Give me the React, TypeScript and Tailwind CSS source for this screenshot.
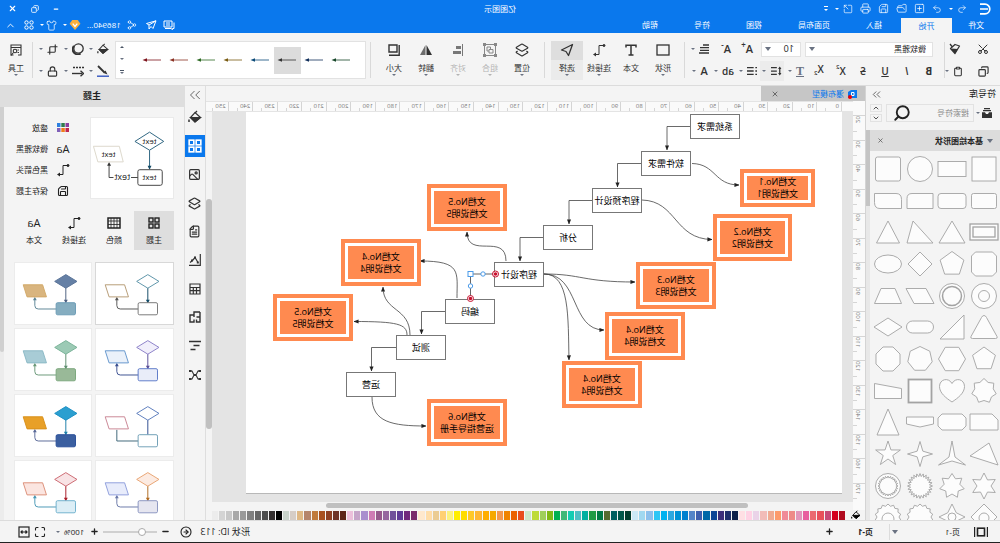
import type { ReactNode } from "react";
import {
  ChevronDown,
  ChevronUp,
  ChevronsRight,
  CircleArrowRight,
  Clipboard,
  Copy,
  Crop,
  FileText,
  FolderOpen,
  Image,
  Layers2,
  Lock,
  Maximize,
  Minus,
  Plus,
  Printer,
  Redo2,
  Save,
  Scissors,
  Search,
  Share2,
  Shirt,
  SquareArrowOutUpRight,
  SquarePlus,
  Undo2,
  X,
} from "lucide-react";

/* ---------- small shared pieces ---------- */

function Caret({ className = "h-0.5 w-1 text-gray-500" }: { className?: string }) {
  return (
    <svg viewBox="0 0 4 2" preserveAspectRatio="none" className={`shrink-0 ${className}`}>
      <path d="M0 0h4L2 2z" fill="currentColor" />
    </svg>
  );
}

interface ToolProps {
  label: string;
  children: ReactNode;
  caret?: boolean;
  muted?: boolean;
  className?: string;
}

function Tool({ label, children, caret, muted, className = "" }: ToolProps) {
  return (
    <button
      type="button"
      aria-label={label}
      className={`flex h-5 items-center gap-1 ${muted ? "text-gray-400" : "text-[#333]"} ${className}`}
    >
      {children}
      {caret && <Caret />}
    </button>
  );
}

interface BigToolProps {
  label: string;
  children: ReactNode;
  caret?: boolean;
  disabled?: boolean;
  active?: boolean;
}

function BigTool({ label, children, caret, disabled, active }: BigToolProps) {
  return (
    <button
      type="button"
      disabled={disabled}
      className={`flex h-[39px] w-8 flex-col items-center text-[8px] leading-3 ${
        disabled ? "text-[#b4b4b4]" : "text-[#333]"
      } ${active ? "bg-[#ebebeb]" : ""}`}
    >
      <span className={`flex h-[19px] w-full items-center justify-center ${active ? "bg-[#dedede]" : ""}`}>
        {children}
      </span>
      <span className="mt-0.5 whitespace-nowrap">{label}</span>
      {caret && <Caret className={disabled ? "h-0.5 w-1 text-[#b4b4b4]" : "h-0.5 w-1 text-gray-500"} />}
    </button>
  );
}

function Divider() {
  return <div className="h-9 w-px shrink-0 bg-[#d9d9d9]" />;
}

function ConnectorIcon({ className = "size-3.5" }: { className?: string }) {
  return (
    <svg viewBox="0 0 14 14" className={className} fill="none" stroke="currentColor">
      <path d="M2 2.5h5v9h4" />
      <circle cx="2" cy="2.5" r="1" fill="currentColor" />
      <path d="M10 9.5l3 2-3 2z" fill="currentColor" stroke="none" />
    </svg>
  );
}

function GridIcon({ className = "size-3" }: { className?: string }) {
  return (
    <svg viewBox="0 0 12 12" className={className} fill="none" stroke="currentColor" strokeWidth="1.4">
      <rect x="1" y="1" width="4" height="4" />
      <rect x="7" y="1" width="4" height="4" />
      <rect x="1" y="7" width="4" height="4" />
      <rect x="7" y="7" width="4" height="4" />
    </svg>
  );
}

function BucketIcon({ className = "size-3.5" }: { className?: string }) {
  return (
    <svg viewBox="0 0 14 14" className={className} fill="none" stroke="currentColor" strokeWidth="1.2">
      <path d="M5 1l2 2" />
      <path d="M1.5 7.5L7 2.5l4.5 5L7 12z" />
      <path d="M1.5 7.5h10L7 12z" fill="currentColor" />
      <path d="M13 9.5V12" strokeWidth="1.5" />
    </svg>
  );
}

/* ---------- title bar ---------- */

const tabs = ["插入", "页面布局", "视图", "符号", "帮助"];

function TitleBar() {
  return (
    <header className="shrink-0 bg-[#0a78ed] text-white">
      <div className="grid h-[17px] grid-cols-3 items-center">
        <div className="flex items-center gap-[7px] pl-2">
          <svg viewBox="0 0 14 12" className="h-3 w-3.5" fill="none" stroke="currentColor" strokeWidth="1.7">
            <path d="M12 1.2H7a4.8 4.8 0 0 0 0 9.6h5M4 6h8" />
          </svg>
          <button type="button" aria-label="撤销" className="ml-1 flex items-center gap-1">
            <Undo2 size={10} strokeWidth={1.6} />
            <Caret className="h-0.5 w-1 text-white" />
          </button>
          <button type="button" aria-label="重做"><Redo2 size={10} strokeWidth={1.6} /></button>
          <button type="button" aria-label="新建"><SquarePlus size={11} strokeWidth={1.6} /></button>
          <button type="button" aria-label="打开"><FolderOpen size={11} strokeWidth={1.6} /></button>
          <button type="button" aria-label="保存"><Save size={11} strokeWidth={1.6} /></button>
          <button type="button" aria-label="打印"><Printer size={11} strokeWidth={1.6} /></button>
          <button type="button" aria-label="导出" className="flex items-center gap-1">
            <SquareArrowOutUpRight size={10} strokeWidth={1.6} />
            <Caret className="h-0.5 w-1 text-white" />
          </button>
          <button type="button" aria-label="更多" className="flex flex-col items-center gap-0.5">
            <span className="h-px w-1 bg-white" />
            <Caret className="h-0.5 w-1 text-white" />
          </button>
        </div>
        <h1 className="text-center text-[8px] leading-4">亿图图示</h1>
        <div className="flex items-center justify-end gap-3.5 pr-2">
          <button type="button" aria-label="最小化"><Minus size={6} strokeWidth={5} /></button>
          <button type="button" aria-label="还原"><Copy size={8} strokeWidth={2.5} /></button>
          <button type="button" aria-label="关闭"><X size={9} strokeWidth={3} /></button>
        </div>
      </div>
      <div className="flex h-4 items-center text-[8px] leading-4">
        <button type="button" className="w-12">文件</button>
        <button type="button" className="h-[15px] w-[51px] self-end bg-[#f4f4f4] text-[#0a78ed]">开始</button>
        <nav className="flex items-center gap-9 pl-[19px]">
          {tabs.map((tab) => (
            <button key={tab} type="button">{tab}</button>
          ))}
        </nav>
        <div className="ml-auto flex items-center gap-1.5 pr-[5px]">
          <svg viewBox="0 0 12 10" className="h-2.5 w-3" fill="none" stroke="currentColor">
            <path d="M1 2.5v6h1.5v1.2L4 8.5h6M3 1h8v6H3zM5 3h4M5 5h4" />
          </svg>
          <svg viewBox="0 0 12 10" className="h-2.5 w-3" fill="none" stroke="currentColor">
            <path d="M1 .8l9.500 2.700L8 5v4L6 6.500 4 8.500zM8 5L1 .8" />
          </svg>
          <Share2 size={10} strokeWidth={1.8} className="ml-0.5" />
          <span>186940...</span>
          <svg viewBox="0 0 12 11" className="h-2.5 w-3">
            <path d="M3 0h6l3 4-6 7-6-7z" fill="#f9b03c" />
            <path d="M3.5 4L6 7l2.5-3" fill="none" stroke="#fff" strokeWidth="1.5" />
          </svg>
          <Caret className="-ml-1 h-0.5 w-1 text-white" />
          <Shirt size={11} strokeWidth={1.6} />
          <Caret className="-ml-1 h-0.5 w-1 text-white" />
          <svg viewBox="0 0 10 10" className="size-2.5" fill="none" stroke="currentColor">
            <circle cx="2.5" cy="2.5" r="1.7" />
            <circle cx="7.5" cy="2.5" r="1.7" />
            <circle cx="2.5" cy="7.5" r="1.7" />
            <circle cx="7.5" cy="7.5" r="1.7" />
          </svg>
          <ChevronUp size={11} className="ml-0.5" />
        </div>
      </div>
    </header>
  );
}

/* ---------- ribbon ---------- */

const lineStyles = ["#17472a", "#12305c", "#333333", "#0b4a78", "#7a5c12", "#2f6b25", "#8b3325", "#7d141d"];

function Ribbon() {
  return (
    <div className="flex h-[53px] shrink-0 items-center border-b border-[#dcdcdc] bg-[#f4f4f4] pt-0.5">
      <div className="grid w-[55px] grid-cols-2 gap-y-0.5 pl-[11px]">
        <Tool label="剪切"><Scissors size={12} className="-rotate-90" /></Tool>
        <Tool label="格式刷" className="pl-1.5">
          <svg viewBox="0 0 12 12" className="size-3" fill="none" stroke="currentColor" strokeWidth="1.3">
            <path d="M11 1L9 3.500M1.500 3L6 1.500 10.500 5.500 6 10.500z" strokeLinejoin="round" />
            <path d="M3 6l7-.5-4 5z" fill="currentColor" stroke="none" />
          </svg>
        </Tool>
        <Tool label="复制"><Copy size={11} strokeWidth={2.5} /></Tool>
        <Tool label="粘贴" caret className="pl-1"><Clipboard size={11} strokeWidth={2.5} /></Tool>
      </div>
      <Divider />

      <div className="flex w-[259px] flex-col gap-0.5 pl-1">
        <div className="flex h-5 items-center pl-[7px]">
          <div className="relative flex items-center">
            <select
              aria-label="字体"
              className="h-[15px] w-32 appearance-none border border-[#e2e2e2] bg-white pl-1.5 text-[8px] leading-3 text-[#222]"
            >
              <option>微软雅黑</option>
            </select>
            <Caret className="pointer-events-none absolute right-1 h-1 w-1.5 text-gray-500" />
          </div>
          <div className="relative ml-1 flex items-center">
            <select
              aria-label="字号"
              className="h-[15px] w-10 appearance-none border border-[#e2e2e2] bg-white pl-1.5 text-[9px] leading-3 text-[#222]"
            >
              <option>10</option>
            </select>
            <Caret className="pointer-events-none absolute right-1 h-1 w-1.5 text-gray-500" />
          </div>
          <Tool label="增大字号" className="ml-2 w-[22px]">
            <span className="flex text-[11px] leading-4 font-semibold">A<span className="-mt-1 text-[8px]">+</span></span>
          </Tool>
          <Tool label="减小字号" className="w-[22px]">
            <span className="flex text-[11px] leading-4 font-semibold">A<span className="-mt-1 text-[8px]">-</span></span>
          </Tool>
          <Tool label="对齐方式" caret>
            <svg viewBox="0 0 10 10" className="size-2.5" stroke="currentColor" strokeWidth="1.3">
              <path d="M0 1h6M0 3.700h9M0 6.400h9M0 9h10" />
            </svg>
          </Tool>
        </div>
        <div className="flex h-5 items-center text-[10px] leading-4 font-semibold">
          <Tool label="加粗" className="w-[22px] justify-center"><span className="font-bold">B</span></Tool>
          <Tool label="斜体" className="w-[22px] justify-center"><span className="italic">I</span></Tool>
          <Tool label="下划线" className="w-[22px] justify-center"><span className="underline">U</span></Tool>
          <Tool label="删除线" className="w-[22px] justify-center"><span className="line-through">S</span></Tool>
          <Tool label="上标" className="w-[22px] justify-center">
            <span className="flex">X<span className="-mt-1 text-[6px]">2</span></span>
          </Tool>
          <Tool label="下标" className="w-[22px] justify-center">
            <span className="flex">X<span className="mt-1 text-[6px]">2</span></span>
          </Tool>
          <Tool label="清除格式" muted caret className="w-6 justify-center">
            <span className="font-['Liberation_Serif'] text-[12px] text-gray-500 underline">T</span>
          </Tool>
          <Tool label="行距" caret className="w-6 justify-center bg-[#ececec]">
            <svg viewBox="0 0 14 12" className="h-2.5 w-3" fill="none" stroke="currentColor" strokeWidth="1.5">
              <path d="M2.5 2v8M6 2h7M6 6h7M6 10h7" />
              <path d="M.5 3.5l2-3 2 3zM.5 8.5l2 3 2-3z" fill="currentColor" stroke="none" />
            </svg>
          </Tool>
          <Tool label="项目符号" caret className="w-6 justify-center">
            <svg viewBox="0 0 12 12" className="size-2.5" stroke="currentColor" strokeWidth="1.6">
              <path d="M0 2h2M4 2h8M0 6h2M4 6h8M0 10h2M4 10h8" />
            </svg>
          </Tool>
          <Tool label="文字间距" caret className="w-6 justify-center">ab</Tool>
          <Tool label="字体颜色" caret className="w-6 justify-center text-[11px]">A</Tool>
        </div>
      </div>
      <Divider />

      <div className="flex w-[139px] pl-[5px]">
        <BigTool label="形状" caret>
          <svg viewBox="0 0 14 12" className="h-3 w-3.5" fill="none" stroke="currentColor" strokeWidth="1.3">
            <rect x="1" y="1" width="12" height="10" />
          </svg>
        </BigTool>
        <BigTool label="文本">
          <svg viewBox="0 0 12 12" className="size-3" fill="none" stroke="currentColor" strokeWidth="1.5">
            <path d="M1 3.5V1.2h10v2.3M6 1v10M3.5 11h5" />
          </svg>
        </BigTool>
        <BigTool label="连接线" caret>
          <ConnectorIcon />
        </BigTool>
        <BigTool label="选择" caret active>
          <svg viewBox="0 0 14 14" className="size-3.5" fill="none" stroke="currentColor" strokeWidth="1.3">
            <path d="M1.500 1.500L12.500 7 8 8.500 5.500 12.500z" strokeLinejoin="round" />
          </svg>
        </BigTool>
      </div>
      <Divider />

      <div className="flex w-[173px] pl-1.5">
        <BigTool label="位置" caret>
          <Layers2 size={14} />
        </BigTool>
        <BigTool label="组合" caret disabled>
          <svg viewBox="0 0 14 14" className="size-3.5 text-[#888]" fill="none" stroke="currentColor">
            <path d="M1.5 1.5h11v11h-11z" />
            <path d="M4 6.5h4V10H4zM6.5 6.500V4H10v4H8" />
            <path d="M0 0h3v3H0zM11 0h3v3h-3zM0 11h3v3H0zM11 11h3v3h-3z" fill="currentColor" stroke="none" />
          </svg>
        </BigTool>
        <BigTool label="对齐" caret disabled>
          <svg viewBox="0 0 10 12" className="h-3 w-2.5 text-[#777]" fill="currentColor">
            <path d="M0 0h1v12H0zM2 2h5v3H2zM2 7h8v3H2z" />
          </svg>
        </BigTool>
        <BigTool label="翻转" caret>
          <svg viewBox="0 0 12 12" className="size-3" fill="currentColor">
            <path d="M5.5 1v10H0z" />
            <path d="M6.5 1v10H12z" opacity="0.7" />
          </svg>
        </BigTool>
        <BigTool label="大小" caret>
          <svg viewBox="0 0 12 12" className="size-3" fill="none" stroke="currentColor" strokeWidth="1.4">
            <path d="M3 1h8v7H3zM.8 1v10.200H11" />
          </svg>
        </BigTool>
      </div>
      <Divider />

      <div className="ml-1 flex h-[38px] min-w-0 flex-1 items-center border border-[#e2e2e2] bg-white pl-2.5">
        <div className="flex flex-1 justify-between overflow-hidden">
          {lineStyles.map((color, i) => (
            <button
              key={color}
              type="button"
              aria-label={`线条样式 ${i + 1}`}
              className={`flex h-[27px] w-[27px] items-center justify-center ${i === 2 ? "bg-[#dcdcdc]" : ""}`}
            >
              <svg viewBox="0 0 20 6" className="h-1.5 w-5" style={{ color }}>
                <path d="M1 3h15" stroke="currentColor" strokeWidth="0.8" />
                <path d="M15 1.3L19.5 3 15 4.7z" fill="currentColor" />
              </svg>
            </button>
          ))}
        </div>
        <div className="ml-2.5 flex w-3 flex-col items-center gap-2.5">
          <Caret className="h-0.5 w-1 rotate-180 text-gray-600" />
          <Caret />
          <span className="flex flex-col items-center gap-px">
            <span className="h-px w-1 bg-gray-600" />
            <Caret />
          </span>
        </div>
      </div>

      <div className="grid w-[82px] grid-cols-3 gap-y-0.5 pl-1.5">
        <Tool label="填充" caret><BucketIcon className="size-3" /></Tool>
        <Tool label="阴影" caret>
          <svg viewBox="0 0 12 12" className="size-3" fill="none" stroke="currentColor" strokeWidth="1.3">
            <circle cx="5.5" cy="5.5" r="4.7" />
            <path d="M10 3a5 5 0 0 1-6.500 7.500" strokeWidth="2" />
          </svg>
        </Tool>
        <Tool label="裁剪" caret><Crop size={11} strokeWidth={2.5} /></Tool>
        <Tool label="线条颜色" caret>
          <svg viewBox="0 0 12 12" className="size-3" fill="none" stroke="currentColor">
            <path d="M11 1L4.500 7.500" strokeWidth="1.8" />
            <path d="M3.500 5.500L1.500 9.500 5.500 8z" fill="currentColor" stroke="none" />
            <path d="M0 11.200h12" stroke="#3355c0" strokeWidth="1.4" />
          </svg>
        </Tool>
        <Tool label="线型" caret>
          <svg viewBox="0 0 12 12" className="size-3" fill="none" stroke="currentColor" strokeWidth="1.4">
            <path d="M0 2.5h12" strokeDasharray="2 1" />
            <path d="M12 8.5H2" />
            <path d="M3.5 5.8l-3 2.700 3 2.700" />
          </svg>
        </Tool>
        <Tool label="锁定" caret><Lock size={11} strokeWidth={2.5} /></Tool>
      </div>
      <Divider />
      <BigTool label="工具" caret>
        <svg viewBox="0 0 12 12" className="size-3" fill="none" stroke="currentColor" strokeWidth="1.1">
          <path d="M4 11H1V1h10v10H8.500M1 3.500h10" />
          <circle cx="7" cy="7" r="1.800" />
          <path d="M8.500 8.500L11 11.500M3 6h1.500M3 8.500h1.500" />
        </svg>
      </BigTool>
    </div>
  );
}

/* ---------- symbol library ---------- */

function radial(n: number, outer: number, inner = outer, turn = 0) {
  const steps = inner === outer ? n : n * 2;
  return Array.from({ length: steps }, (_, i) => {
    const r = inner !== outer && i % 2 ? inner : outer;
    const a = (i * 2 * Math.PI) / steps - Math.PI / 2 + turn;
    return `${(r * Math.cos(a)).toFixed(2)},${(r * Math.sin(a)).toFixed(2)}`;
  }).join(" ");
}

const symbols: ReactNode[] = [
  <rect x="-12" y="-12" width="24" height="24" />,
  <rect x="-14" y="-7.5" width="28" height="15" />,
  <circle r="12.5" />,
  <rect x="-12.5" y="-12" width="25" height="24" rx="2" />,

  <rect x="-12.5" y="-7.5" width="25" height="15" rx="2" />,
  <rect x="-14" y="-7.5" width="28" height="15" rx="3" />,
  <path d="M-13 -7.5H8q5 0 5 5V7.5H-13z" />,
  <path d="M-13.5 -7.5H8q5.500 0 5.500 6V7.500H-8q-5.500 0-5.500-6z" transform="scale(1 -1) rotate(180)" />,

  <g strokeWidth="1.3"><rect x="-14" y="-8" width="28" height="16" /><rect x="-11" y="-5" width="22" height="10" /></g>,
  <path d="M0 -11L13 11H-13z" />,
  <path d="M7 -11L13 11H-13z" />,
  <path d="M0 -11L11.5 11H-11.5z" />,

  <path d="M-8.5 -12h17l4 4V8l-4 4h-17l-4-4V-8z" />,
  <polygon points={radial(5, 12.5)} />,
  <path d="M0 -12L12 0 0 12-12 0z" />,
  <ellipse rx="13.5" ry="9" />,

  <g><circle r="12.5" /><circle r="5.5" /></g>,
  <g><circle r="12.5" /><circle r="9.5" strokeWidth="1.5" /></g>,
  <path d="M-6 -7.5H14L6 7.5H-14z" />,
  <path d="M-7 -7.5H7L13.5 7.5H-13.5z" />,

  <path d="M0 -11.5q1.500 0 2.500 2L13 9.500q1 2-1.500 2h-23q-2.500 0-1.500-2L-2.500 -9.500q1-2 2.500-2z" />,
  <path d="M-12 -12V12H12z" />,
  <rect x="-13.5" y="-6" width="27" height="12" rx="6" />,
  <path d="M0 -9L14 0 0 9-14 0z" />,

  <polygon points={radial(5, 12)} strokeLinejoin="round" />,
  <polygon points={radial(6, 13.5, 13.5, Math.PI / 6)} />,
  <polygon points={radial(7, 12.5)} />,
  <polygon points={radial(8, 13, 13, Math.PI / 8)} />,

  <polygon points={radial(7, 12.5, 9.5)} strokeLinejoin="round" />,
  <path d="M0 11C-6 7-12.5 2-12.5 -4.5C-12.5 -12-3.5 -14 0 -7.5C3.5 -14 12.5 -12 12.5 -4.5C12.5 2 6 7 0 11z" />,
  <rect x="-11.5" y="-11.5" width="23" height="23" strokeWidth="1.8" />,
  <path d="M13.5 -7.5V7.5H-13.5V-2.500z" />,

  <path d="M-8 -8H14V8H-14V-2z" />,
  <path d="M-10 -8h20l4 4V4l-4 4h-20l-4-4v-8z" />,
  <path d="M-13.5 -5h27V2L0 5-13.5 2z" />,
  <path d="M0 -13L11 13H-11z" />,

  <path d="M-5 -11L14 2-14 11z" />,
  <path d="M0 -13L3 3 13.5 11 0 7-13.5 11-3 3z" />,
  <polygon points={radial(4, 12.5, 4)} />,
  <polygon points={radial(5, 13, 5)} />,

  <polygon points={radial(6, 13, 7)} />,
  <polygon points={radial(7, 12.5, 8)} />,
  <polygon points={radial(24, 12.5, 9.5)} />,
  <g><circle r="12.5" /><polygon points={radial(24, 10, 8)} /></g>,

  <g><path d="M0 -13L13 0 0 13-13 0z" /><circle cy="1" r="5" /></g>,
  <g><polygon points={radial(4, 13, 6)} /><circle r="4" /></g>,
  <polygon points={radial(14, 13, 11)} />,
  <g><polygon points={radial(14, 13, 11)} /><circle cy="2" r="6" /></g>,
];

function SymbolPanel() {
  return (
    <aside className="flex w-[135px] shrink-0 flex-col border-r border-[#d4d4d4] bg-[#f4f4f4]">
      <div className="flex h-4 items-center justify-between px-1">
        <h2 className="text-[9px] leading-4 text-[#222]">符号库</h2>
        <button type="button" aria-label="折叠" className="text-[#555]"><ChevronsRight size={13} strokeWidth={1.6} /></button>
      </div>
      <div className="mt-0.5 flex items-center pr-1 pl-2">
        <button type="button" aria-label="打开符号库" className="flex items-center gap-0.5">
          <svg viewBox="0 0 10 10" className="size-2.5" fill="#333">
            <path d="M2 0h6v1.2H2zM1 2h8v1.3H1zM0 4.3h3L4 6h2l1-1.700h3V10H0z" />
          </svg>
          <Caret />
        </button>
        <label className="ml-0.5 flex h-[18px] flex-1 items-center border border-[#e2e2e2] pl-1">
          <input
            type="text"
            aria-label="搜索符号"
            placeholder="搜索符号"
            className="w-0 flex-1 bg-transparent text-[8px] leading-4 outline-none placeholder:text-[#8a8a8a]"
          />
          <Search size={18} strokeWidth={2.5} className="mr-1.5 text-[#222]" />
        </label>
        <div className="ml-1 flex flex-col gap-0.5">
          <button type="button" aria-label="上一个" className="flex h-2 w-3 items-center justify-center border border-[#e2e2e2]">
            <ChevronUp size={8} />
          </button>
          <button type="button" aria-label="下一个" className="flex h-2 w-3 items-center justify-center border border-[#e2e2e2]">
            <ChevronDown size={8} />
          </button>
        </div>
      </div>
      <div className="mt-2 flex min-h-0 flex-1">
        <div className="min-w-0 flex-1 overflow-hidden">
          <div className="flex h-[21px] items-center bg-[#dcdcdc] px-[7px]">
            <Caret className="h-1 w-1.5 text-gray-500" />
            <h3 className="ml-1 flex-1 text-[8px] leading-4 font-bold text-[#222]">基本绘图形状</h3>
            <button type="button" aria-label="关闭分组" className="text-[#555]"><X size={7} strokeWidth={2.5} /></button>
          </div>
          <div className="mt-0.5 grid h-[380px] w-32 grid-cols-4 grid-rows-12">
            {symbols.map((shape, i) => (
              <button key={i} type="button" aria-label={`符号 ${i + 1}`} className="flex items-center justify-center">
                <svg viewBox="-16 -16 32 32" className="size-8" fill="#fcfcfc" stroke="#a3a3a3" strokeWidth="0.9">
                  {shape}
                </svg>
              </button>
            ))}
          </div>
        </div>
        <div className="w-1 bg-[#e8e8e8]">
          <div className="h-[76px] bg-[#c4c4c4]" />
        </div>
      </div>
    </aside>
  );
}

/* ---------- canvas ---------- */

const steps = [
  { text: "系统需求", x: 102, y: 2 },
  { text: "软件需求", x: 151, y: 39 },
  { text: "程序预设计", x: 200, y: 76 },
  { text: "分析", x: 249, y: 113 },
  { text: "程序设计", x: 298, y: 150 },
  { text: "编码", x: 347, y: 187 },
  { text: "测试", x: 396, y: 223 },
  { text: "运营", x: 446, y: 260 },
];

const notes = [
  { title: "文档No.1", text: "文档说明1", x: 27, y: 57, w: 75, h: 38 },
  { title: "文档No.2", text: "文档说明2", x: 50, y: 102, w: 79, h: 47 },
  { title: "文档No.3", text: "文档说明3", x: 126, y: 150, w: 80, h: 47 },
  { title: "文档No.4", text: "文档说明4", x: 157, y: 200, w: 80, h: 48 },
  { title: "文档No.4", text: "文档说明4", x: 200, y: 249, w: 80, h: 47 },
  { title: "文档No.5", text: "文档说明5", x: 335, y: 72, w: 80, h: 47 },
  { title: "文档No.4", text: "文档说明4", x: 421, y: 127, w: 80, h: 47 },
  { title: "文档No.5", text: "文档说明5", x: 489, y: 182, w: 80, h: 47 },
  { title: "文档No.6", text: "运营指导手册", x: 335, y: 287, w: 80, h: 47 },
];

const links = [
  "M151 14.5H175V38",
  "M200 51.5H224.5V75",
  "M249 88.5H273V112",
  "M298 125.5H322V149",
  "M396 199.5H420.5V222",
  "M445 235.5H470.5V259",
  "M150 51.5C126 52 128 73 103 73",
  "M200 88C165 89 168 127 130 127.5",
  "M298 162C260 162 260 170 207 170",
  "M298 162C262 162 272 218 238 218",
  "M298 162C272 162 274 205 273 248",
  "M336 149C336 120 375 148 375 120",
  "M385 186C385 160 380 149 422 149",
  "M432 223C432 195 459 200 459 175",
  "M435 223C435 212 445 209.5 488 209.5",
  "M470 285C470 310 450 314 416 314",
];

function Page() {
  return (
    <div className="relative ml-[11px] h-[382px] w-[596px] shrink-0 border-b border-[#b8b8b8] bg-white">
      <svg className="absolute inset-0 size-full" fill="none" stroke="#444" strokeWidth="0.8">
        <defs>
          <marker
            id="tip"
            viewBox="0 0 6 6"
            refX="5.5"
            refY="3"
            markerWidth="5"
            markerHeight="5"
            markerUnits="userSpaceOnUse"
            orient="auto"
          >
            <path d="M0 .5L6 3 0 5.500z" fill="#222" stroke="none" />
          </marker>
        </defs>
        {links.map((d) => (
          <path key={d} d={d} markerEnd="url(#tip)" />
        ))}
      </svg>
      {steps.map((s) => (
        <div
          key={s.text}
          className="absolute flex h-[25px] w-[50px] items-center justify-center border border-[#777] bg-white text-[9px] leading-3 whitespace-nowrap text-black"
          style={{ left: s.x, top: s.y }}
        >
          {s.text}
        </div>
      ))}
      {notes.map((n) => (
        <div
          key={`${n.x}-${n.y}`}
          className="absolute border-4 border-[#ff8a50] bg-white p-[3px]"
          style={{ left: n.x, top: n.y, width: n.w, height: n.h }}
        >
          <div className="flex size-full flex-col items-center justify-center bg-[#ff8a50] text-[9px] leading-3 whitespace-nowrap text-black">
            <span>{n.title}</span>
            <span>{n.text}</span>
          </div>
        </div>
      ))}
      {/* selected connector with its drag handles */}
      <svg className="absolute inset-0 size-full" fill="#fff" stroke="#4a9bea">
        <path d="M347 162H371.5V186" fill="none" stroke="#666" />
        <circle cx="359" cy="162" r="2.2" />
        <circle cx="371.5" cy="174" r="2.2" />
        <rect x="369" y="159.5" width="5" height="5" />
        <g stroke="#c8102e">
          <circle cx="346.5" cy="162" r="3" />
          <circle cx="371.5" cy="186.5" r="3" />
        </g>
        <g fill="#c8102e" stroke="none">
          <circle cx="346.5" cy="162" r="1.8" />
          <circle cx="371.5" cy="186.5" r="1.8" />
        </g>
      </svg>
    </div>
  );
}

const swatches = [
  "#b00a1e", "#d40020", "#c74a78", "#e8505b", "#eb6a70", "#e85f9f", "#e296bb", "#ee8a88", "#f08b98", "#fd9b6b", "#f0ab92", "#f2bcb8", "#ead3e8", "#ffd2e4", "#ffdfe4",
  "#0d1f4a", "#1f2f6b", "#3d2f7a", "#0d4696", "#0068a8", "#3f5fae", "#5484c8", "#0080cf", "#0091d6", "#2ea8e0", "#00b2f0", "#2dc6f5", "#8cc0ec", "#a0d8f0", "#cce9f6",
  "#003d2e", "#00574a", "#006060", "#566b2f", "#007a45", "#1f9a45", "#00b0a0", "#4fbfc4", "#15ccb2", "#3fb878", "#00b050", "#80b917", "#9fcf5c", "#bedb39", "#cde8c8",
  "#e84e1b", "#eb6100", "#f08300", "#f39850", "#f5a800", "#ffae00", "#ffb733", "#ffc828", "#ffdc00", "#ffee00", "#fbf27f", "#ffd073", "#ebcc93", "#ffdda8", "#ffe8cc",
  "#7a2a6a", "#70287c", "#5f3a96", "#70509a", "#96689f", "#965a8c", "#cf7cb4", "#a98fce", "#c6a5c9", "#ecc0db",
  "#5c2317", "#6e3428", "#8e4023", "#a8501f", "#c07a3c", "#b5846a", "#dfb885", "#d6cdc6", "#c9d3cb",
  "#000000", "#332f2f", "#4d4d4d", "#666666", "#808080", "#999999", "#a8a8a8", "#c8c8c8", "#d4d4d4", "#ececec",
];

function Workspace() {
  return (
    <main className="flex min-w-0 flex-1 flex-col bg-[#f4f4f4]">
      <div className="flex h-[15px] shrink-0">
        <div className="flex w-[104px] items-center bg-[#c6c6c6] pr-2.5 pl-2">
          <svg viewBox="0 0 9 10" className="h-2.5 w-[9px]">
            <path d="M0 1h6l3 2v6H0z" fill="#0a78ed" />
            <path d="M3 3.500h2.500v3H3z" fill="none" stroke="#fff" />
            <circle cx="7" cy="8" r="2" fill="#e00" />
          </svg>
          <span className="ml-1 flex-1 text-[8px] leading-4 text-[#0a78ed]">瀑布模型</span>
          <button type="button" aria-label="关闭文档" className="text-[#555]"><X size={8} strokeWidth={2.5} /></button>
        </div>
      </div>
      <div className="flex min-h-0 flex-1">
        <div className="w-3 shrink-0 overflow-hidden bg-[#fafafa] pt-3.5">
          <div className="grid h-[392px] grid-rows-16">
            {Array.from({ length: 16 }, (_, i) => (
              <div key={i} className="flex flex-col items-end justify-between border-t border-[#d5d5d5] pb-2">
                <span className="rotate-180 text-[6px] leading-[9px] text-[#777] [writing-mode:vertical-rl]">
                  {(i + 2) * 10}
                </span>
                <span className="h-px w-1 bg-[#d5d5d5]" />
              </div>
            ))}
          </div>
        </div>
        <div className="flex min-w-0 flex-1 flex-col">
          <div className="h-[11px] shrink-0 overflow-hidden border-y border-[#e4e4e4] bg-[#fafafa] pl-[11px]">
            <div className="flex h-full w-[638px]">
              {Array.from({ length: 26 }, (_, i) => (
                <div key={i} className="flex h-full w-0 flex-1 items-end justify-between border-l border-[#d5d5d5] pr-2 pl-0.5">
                  <span className="text-[6px] leading-[9px] text-[#777]">{i * 10}</span>
                  <span className="h-[3px] w-px bg-[#d5d5d5]" />
                </div>
              ))}
            </div>
          </div>
          <div className="flex min-h-0 flex-1">
            <div className="min-w-0 flex-1 overflow-hidden bg-[#e4e4e4]">
              <Page />
            </div>
            <div className="w-1.5 bg-[#f4f4f4] pt-[87px]">
              <div className="h-[230px] rounded-full bg-[#c0c0c0]" />
            </div>
          </div>
          <div className="h-2 shrink-0 pt-px pl-[105px]">
            <div className="h-[5px] w-[422px] rounded-full bg-[#c0c0c0]" />
          </div>
        </div>
      </div>
      <div className="flex h-2.5 shrink-0 items-center pr-1.5 pl-1">
        <BucketIcon className="size-2.5 shrink-0" />
        <div className="ml-1.5 flex h-[9px] flex-1 gap-px">
          {swatches.map((color) => (
            <span key={color} className="h-full flex-1" style={{ backgroundColor: color }} />
          ))}
        </div>
      </div>
    </main>
  );
}

/* ---------- theme panel ---------- */

const sideTools = [
  { label: "填充", icon: <BucketIcon /> },
  { label: "主题", icon: <GridIcon className="size-3.5" /> },
  { label: "图片", icon: <Image size={13} strokeWidth={2.2} /> },
  { label: "图层", icon: <Layers2 size={13} strokeWidth={2.2} /> },
  { label: "备注", icon: <FileText size={13} strokeWidth={2.2} /> },
  {
    label: "图表",
    icon: (
      <svg viewBox="0 0 12 12" className="size-3" fill="none" stroke="currentColor" strokeWidth="1.2">
        <path d="M.7 0v11.3H12M3 8.500L6 3.500l2.500 3L11 8.500" />
        <path d="M2.200 7.500h2v2h-2zM5 2.500h2v2H5zM8 5.500h2v2H8z" fill="currentColor" stroke="none" />
      </svg>
    ),
  },
  {
    label: "表格",
    icon: (
      <svg viewBox="0 0 12 12" className="size-3" fill="none" stroke="currentColor" strokeWidth="1.2">
        <path d="M1 1h10v10H1zM1 4.500h10M1 7.700h10M4.500 4.500V11M7.700 4.500V11" />
      </svg>
    ),
  },
  {
    label: "组件",
    icon: (
      <svg viewBox="0 0 12 12" className="size-3" fill="none" stroke="currentColor" strokeWidth="1.4">
        <path d="M1 1h6v3h4v7H7V8.500M1 1v10h3.500V8.500M1 6h3.500M7 4v2" />
      </svg>
    ),
  },
  {
    label: "甘特图",
    icon: (
      <svg viewBox="0 0 12 12" className="size-3" fill="none" stroke="currentColor" strokeWidth="1.6">
        <path d="M0 1.500h12M1.500 5.500h6M5.500 9.500h5" />
      </svg>
    ),
  },
  {
    label: "思维导图",
    icon: (
      <svg viewBox="0 0 12 12" className="size-3" fill="none" stroke="currentColor" strokeWidth="1.1">
        <path d="M1 2h2l2 4h2l2-4h2M1 10h2l2-4M7 6l2 4h2" />
        <path d="M0 1h2.500v2H0zM9.500 1H12v2H9.500zM0 9h2.500v2H0zM9.500 9H12v2H9.500zM5 5h2v2H5z" fill="currentColor" stroke="none" />
      </svg>
    ),
  },
];

function SideStrip() {
  return (
    <div className="flex w-[22px] shrink-0 flex-col border-x border-[#dedede] bg-[#f4f4f4] text-[#333]">
      <button type="button" aria-label="折叠" className="flex h-[17px] items-center justify-center text-[#666]">
        <ChevronsRight size={18} strokeWidth={1.3} />
      </button>
      <div className="grid h-[286px] grid-rows-10 items-center">
        {sideTools.map((t, i) => (
          <button
            key={t.label}
            type="button"
            aria-label={t.label}
            className={`flex h-[22px] items-center justify-center ${i === 1 ? "bg-[#0a78ed] text-white" : ""}`}
          >
            {t.icon}
          </button>
        ))}
      </div>
    </div>
  );
}

interface Theme {
  diamond: [string, string];
  box: [string, string];
  slant: [string, string];
  down: string;
  back: string;
  plain?: boolean;
}

// [fill, stroke] for each figure of the thumbnail
const themes: Theme[] = [
  { diamond: ["#fff", "#5b93a8"], box: ["#fff", "#777"], slant: ["#fff", "#b59a74"], down: "#124a66", back: "#555" },
  { diamond: ["#6580a5", "#5b7498"], box: ["#85adc0", "#6c9cb5"], slant: ["#d9b57f", "#d2a968"], down: "#4d5f80", back: "#5d8596" },
  { diamond: ["#f1effb", "#8b7fc8"], box: ["#e9edf9", "#5c79c8"], slant: ["#eaf1fa", "#6596cc"], down: "#5a4f98", back: "#3a4f90" },
  { diamond: ["#9ccab5", "#7ab398"], box: ["#99b998", "#7ba77c"], slant: ["#a8ccd6", "#8bb8c5"], down: "#5f8f70", back: "#6a9878" },
  { diamond: ["#fff", "#5b7cbd"], box: ["#fff", "#6f9fb5"], slant: ["#fff", "#c98593"], down: "#2f4d90", back: "#3d6678", plain: true },
  { diamond: ["#2b9fd0", "#1d8fc4"], box: ["#3b5fa0", "#284f98"], slant: ["#e8a028", "#d9901a"], down: "#1d7fa8", back: "#5a6a98" },
  { diamond: ["#fcebe2", "#e8a472"], box: ["#e6e6f0", "#8a94c0"], slant: ["#e8ecfb", "#8f9fdc"], down: "#b06a20", back: "#6a78a8" },
  { diamond: ["#f8e3e5", "#cc6a72"], box: ["#dceef6", "#6fb0cc"], slant: ["#fbe5e0", "#dc8f78"], down: "#a81c28", back: "#4a98b5" },
];

function ThemeThumb({ theme }: { theme: Theme }) {
  return (
    <svg viewBox="0 0 78 63" className="h-[61px] w-full">
      <path d="M25.5 25.5V41" stroke={theme.down} />
      <path
        d={theme.plain ? "M35 47.5H57.5V36" : "M35 47.5H54q3.500 0 3.500-3.500V36"}
        fill="none"
        stroke={theme.back}
      />
      {!theme.plain && (
        <g>
          <path d="M23.5 38h4l-2 3.500z" fill={theme.down} />
          <path d="M55.5 38.5h4l-2-3.500z" fill={theme.back} />
        </g>
      )}
      <path d="M25.5 12L37 19 25.5 26 14 19z" fill={theme.diamond[0]} stroke={theme.diamond[1]} strokeLinejoin="round" />
      <rect x="15.5" y="41" width="20" height="12.5" rx="1.5" fill={theme.box[0]} stroke={theme.box[1]} />
      <path d="M49.5 22.5H69.500L65.500 35H45.500z" fill={theme.slant[0]} stroke={theme.slant[1]} strokeLinejoin="round" />
    </svg>
  );
}

const themeOptions = [
  {
    label: "盛放",
    icon: (
      <svg viewBox="0 0 12 9" className="h-[9px] w-3">
        <path d="M0 0h3.500v4H0z" fill="#8a3fa0" />
        <path d="M4.200 0h3.500v4H4.200z" fill="#2f7d4f" />
        <path d="M8.500 0H12v4H8.500z" fill="#2b7fe0" />
        <path d="M0 5h3.500v4H0z" fill="#c02850" />
        <path d="M4.200 5h3.500v4H4.200z" fill="#ef7d1a" />
        <path d="M8.500 5H12v4H8.500z" fill="#8060b8" />
      </svg>
    ),
  },
  { label: "微软雅黑", icon: <span className="text-[11px]">Aa</span> },
  { label: "黑色箭头", icon: <ConnectorIcon className="size-3.5" /> },
  { label: "保存主题", icon: <Save size={12} strokeWidth={2.2} /> },
];

const themeTabs = [
  { label: "主题", icon: <GridIcon /> },
  {
    label: "颜色",
    icon: (
      <svg viewBox="0 0 14 12" className="h-3 w-3.5" fill="none" stroke="currentColor">
        <path d="M1 1h12v10H1z" strokeWidth="1.5" />
        <path d="M4 1v10M7 1v10M10 1v10M1 4h12M1 7.500h12" strokeWidth="0.8" />
      </svg>
    ),
  },
  { label: "连接线", icon: <ConnectorIcon /> },
  { label: "文本", icon: <span className="text-[11px]">Aa</span> },
];

function ThemePanel() {
  return (
    <aside className="flex w-[184px] shrink-0 flex-col bg-[#f4f4f4]">
      <h2 className="h-[21px] shrink-0 bg-[#dedede] text-center text-[9px] leading-5 font-bold text-[#222]">主题</h2>
      <div className="flex min-h-0 flex-1">
        <div className="min-w-0 flex-1 overflow-hidden pt-2.5 pl-2.5">
          <div className="flex gap-5">
            <svg viewBox="0 0 84 82" className="h-[82px] w-[84px] border border-[#eaeaea] bg-white text-[8px]" fill="#222">
              <path d="M24 14.5L39 24 24 33 9.500 24z" fill="#fff" stroke="#2c6480" />
              <path d="M24 33v17" stroke="#2c6480" />
              <path d="M22 49h4l-2 4z" fill="#124a66" />
              <rect x="11" y="53" width="25" height="16" rx="2" fill="#fff" stroke="#444" />
              <path d="M36 61H65.500V48" fill="none" stroke="#444" />
              <path d="M63.500 49h4l-2-4z" fill="#333" />
              <path d="M55 29H81.500L77 45H51z" fill="#fff" stroke="#dcd8cc" strokeLinejoin="round" />
              <rect x="43" y="57" width="18" height="8" fill="#fff" />
              <text x="24" y="27" textAnchor="middle">text</text>
              <text x="24" y="64" textAnchor="middle">text</text>
              <text x="66" y="40" textAnchor="middle">text</text>
              <text x="52" y="64" textAnchor="middle" fontSize="9">text</text>
            </svg>
            <ul className="flex flex-col text-[8px] leading-4 text-[#222]">
              {themeOptions.map((o) => (
                <li key={o.label}>
                  <button type="button" className="flex h-[21px] items-center gap-2">
                    <span className="flex w-3.5 justify-center">{o.icon}</span>
                    {o.label}
                  </button>
                </li>
              ))}
            </ul>
          </div>
          <div className="mt-2.5 flex">
            {themeTabs.map((t, i) => (
              <button
                key={t.label}
                type="button"
                className={`flex h-[39px] w-10 flex-col items-center justify-center gap-1 text-[8px] leading-3 text-[#222] ${
                  i === 0 ? "bg-[#dedede]" : ""
                }`}
              >
                <span className="flex h-3.5 items-center">{t.icon}</span>
                {t.label}
              </button>
            ))}
          </div>
          <div className="mt-3 grid w-[160px] grid-cols-2 gap-[3px]">
            {themes.map((theme, i) => (
              <button
                key={i}
                type="button"
                aria-label={`主题 ${i + 1}`}
                className={`h-[63px] border bg-white ${i === 0 ? "border-[#d8d8d8]" : "border-[#ececec]"}`}
              >
                <ThemeThumb theme={theme} />
              </button>
            ))}
          </div>
        </div>
        <div className="w-1 bg-[#ececec]">
          <div className="h-[245px] rounded-b-full bg-[#d0d0d0]" />
        </div>
      </div>
    </aside>
  );
}

/* ---------- status bar ---------- */

function StatusBar() {
  return (
    <footer className="flex h-[23px] shrink-0 items-center border-t border-b border-t-[#dcdcdc] border-b-[#222] bg-[#f4f4f4] text-[8px] leading-4 text-[#222]">
      <button type="button" aria-label="页面视图" className="ml-3">
        <svg viewBox="0 0 14 10" className="h-2.5 w-3.5" fill="none" stroke="currentColor" strokeWidth="1.2">
          <path d="M.6 0v10M13.4 0v10" />
          <rect x="3.5" y="1.2" width="7" height="7.6" strokeWidth="1.6" />
        </svg>
      </button>
      <label className="relative ml-3.5 flex w-[71px] items-center border-r border-[#dcdcdc]">
        <select aria-label="页面" className="w-full appearance-none bg-transparent">
          <option>页-1</option>
        </select>
        <Caret className="pointer-events-none absolute right-0.5 h-1 w-1.5 text-gray-500" />
      </label>
      <button type="button" className="ml-4 font-bold">页-1</button>
      <button type="button" aria-label="添加页面" className="ml-6"><Plus size={9} strokeWidth={3.5} /></button>

      <div className="ml-auto flex items-center pr-[18px]">
        <span className="text-[9px]">形状 ID: 113</span>
        <button type="button" aria-label="演示" className="ml-2">
          <CircleArrowRight size={12} strokeWidth={2.2} className="-scale-x-100" />
        </button>
        <button type="button" aria-label="缩小" className="ml-2.5"><Minus size={9} strokeWidth={3.5} /></button>
        <input
          type="range"
          aria-label="缩放"
          min={0}
          max={100}
          defaultValue={24}
          className="mx-1 h-3 w-[54px] appearance-none bg-transparent [&::-webkit-slider-runnable-track]:h-0.5 [&::-webkit-slider-runnable-track]:bg-[#d0d0d0] [&::-webkit-slider-thumb]:-mt-[3px] [&::-webkit-slider-thumb]:size-2 [&::-webkit-slider-thumb]:appearance-none [&::-webkit-slider-thumb]:rounded-full [&::-webkit-slider-thumb]:border [&::-webkit-slider-thumb]:border-[#aaa] [&::-webkit-slider-thumb]:bg-white"
        />
        <button type="button" aria-label="放大"><Plus size={9} strokeWidth={3.5} /></button>
        <button type="button" className="ml-1.5 flex items-center gap-1 text-[8px]">
          100%
          <Caret />
        </button>
        <button type="button" aria-label="全屏" className="ml-2.5"><Maximize size={12} strokeWidth={2.2} /></button>
        <button type="button" aria-label="适应宽度" className="ml-1">
          <svg viewBox="0 0 12 12" className="size-3" fill="none" stroke="currentColor" strokeWidth="1.2">
            <rect x="1" y="1" width="10" height="10" />
            <path d="M3 6h6M4.500 4.500L3 6l1.500 1.500M7.500 4.500L9 6 7.500 7.500" />
          </svg>
        </button>
      </div>
    </footer>
  );
}

export default function App() {
  return (
    // the whole window is flipped left to right
    <div className="flex h-screen w-full -scale-x-100 flex-col overflow-hidden bg-[#f4f4f4] font-['Open_Sans','Noto_Sans_CJK_SC',sans-serif]">
      <TitleBar />
      <Ribbon />
      <div className="flex min-h-0 flex-1">
        <SymbolPanel />
        <Workspace />
        <SideStrip />
        <ThemePanel />
      </div>
      <StatusBar />
    </div>
  );
}
